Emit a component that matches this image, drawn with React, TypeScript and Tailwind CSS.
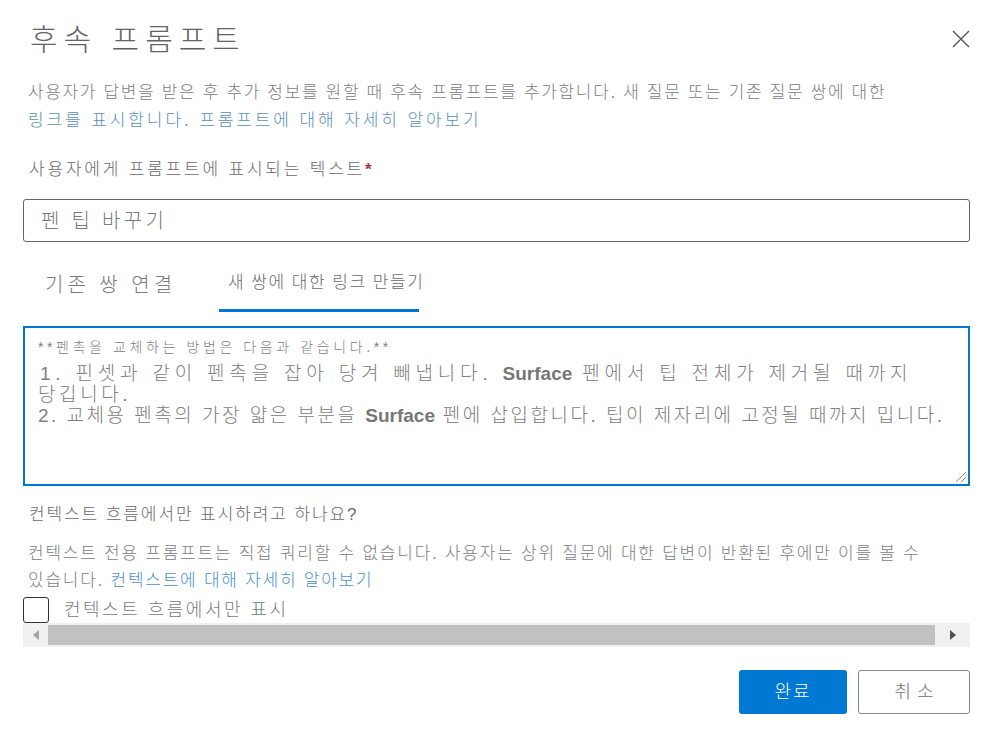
import React from 'react';

const font = { fontFamily: '"Liberation Sans", "Noto Sans CJK KR", sans-serif' };

export default function App() {
  return (
    <div className="w-[985px] h-[740px] bg-white overflow-hidden font-light" style={font}>
      <div className="pl-[23px] pr-[15px]">
        {/* header */}
        <div className="flex justify-between items-start pt-[18px]">
          <h1 className="pl-[7px] text-[30px] leading-[44px] text-[#646464] tracking-[6px] font-light">후속 프롬프트</h1>
          <button className="mt-[12px] w-[18px] h-[18px] flex items-center justify-center">
            <svg width="18" height="18" viewBox="0 0 18 18">
              <path d="M1 1 L17 17 M17 1 L1 17" stroke="#555" strokeWidth="1.4" fill="none" />
            </svg>
          </button>
        </div>

        {/* description */}
        <p className="mt-[17px] pl-[5px] text-[17px] leading-[28px] text-[#808080] whitespace-nowrap">
          <span className="tracking-[1.65px]">사용자가 답변을 받은 후 추가 정보를 원할 때 후속 프롬프트를 추가합니다. 새 질문 또는 기존 질문 쌍에 대한</span>
          <br />
          <span className="text-[#5b8fbf] tracking-[2.9px]">링크를 표시합니다. 프롬프트에 대해 자세히 알아보기</span>
        </p>

        {/* label */}
        <div className="mt-[21px] pl-[6px] text-[17px] leading-[28px] text-[#6b6b6b] tracking-[2.8px]">
          사용자에게 프롬프트에 표시되는 텍스트<span className="text-[#b0343a] font-bold">*</span>
        </div>

        {/* input */}
        <div className="mt-[15px] w-[947px] h-[43px] border border-[#666] rounded-[3px] flex items-center pl-[17px] text-[20px] text-[#7a7a7a] tracking-[3.3px]">
          펜 팁 바꾸기
        </div>

        {/* tabs */}
        <div className="mt-[16px] h-[54px] flex items-end">
          <div className="w-[196px] h-full flex flex-col">
            <div className="pl-[22px] pt-[12px] text-[20px] leading-[30px] text-[#7a7a7a] tracking-[4px]">기존 쌍 연결</div>
          </div>
          <div className="w-[210px] h-full flex flex-col justify-between">
            <div className="pl-[9px] pt-[12px] text-[17px] leading-[26px] text-[#6b6b6b] tracking-[1.5px] whitespace-nowrap">새 쌍에 대한 링크 만들기</div>
            <div className="w-[200px] h-[3px] bg-[#0078d4]" />
          </div>
        </div>

        {/* textarea */}
        <div className="relative mt-[14px] w-[947px] h-[160px] border-2 border-[#0078d4] pl-[13px] pt-[9px] text-[#808080] whitespace-nowrap">
          <div className="text-[14px] leading-[20px] tracking-[3.6px]">**펜촉을 교체하는 방법은 다음과 같습니다.**</div>
          <div className="text-[19px] leading-[21px] mt-[6px]">
            <div className="pl-[2px] tracking-[4.8px]">1. 핀셋과 같이 펜촉을 잡아 당겨 빼냅니다. <span className="font-bold tracking-[0px] text-[#777]">Surface</span> 펜에서 팁 전체가 제거될 때까지</div>
            <div className="tracking-[3.6px]">당깁니다.</div>
            <div className="tracking-[2.5px]">2. 교체용 펜촉의 가장 얇은 부분을 <span className="font-bold tracking-[0px] text-[#777]">Surface</span> 펜에 삽입합니다. 팁이 제자리에 고정될 때까지 밉니다.</div>
          </div>
          <svg className="absolute right-[1px] bottom-[1px]" width="12" height="12" viewBox="0 0 12 12">
            <path d="M11 1 L1 11 M11 6 L6 11" stroke="#888" strokeWidth="1" fill="none" />
          </svg>
        </div>

        {/* context question */}
        <div className="mt-[15px] pl-[6px] text-[17px] leading-[28px] text-[#6b6b6b] tracking-[1.9px]">
          컨텍스트 흐름에서만 표시하려고 하나요?
        </div>
        <p className="mt-[11px] pl-[5px] text-[17px] leading-[27px] text-[#808080] whitespace-nowrap tracking-[1.75px]">
          컨텍스트 전용 프롬프트는 직접 쿼리할 수 없습니다. 사용자는 상위 질문에 대한 답변이 반환된 후에만 이를 볼 수
          <br />
          있습니다. <span className="text-[#4a90d2]">컨텍스트에 대해 자세히 알아보기</span>
        </p>

        {/* checkbox */}
        <div className="mt-[3px] flex items-center h-[26px]">
          <div className="w-[26px] h-[26px] border border-[#333] rounded-[3px]" />
          <span className="ml-[15px] text-[18px] text-[#7a7a7a] tracking-[2.5px]">컨텍스트 흐름에서만 표시</span>
        </div>

        {/* horizontal scrollbar */}
        <div className="w-[947px] h-[24px] bg-[#f0f0f0] flex items-center">
          <div className="w-[25px] h-full flex items-center justify-center">
            <svg width="6" height="10" viewBox="0 0 6 10"><path d="M6 0 L0 5 L6 10 Z" fill="#a3a3a3" /></svg>
          </div>
          <div className="w-[887px] h-[20px] bg-[#c1c1c1]" />
          <div className="flex-1 h-full flex items-center justify-center">
            <svg width="6" height="10" viewBox="0 0 6 10"><path d="M0 0 L6 5 L0 10 Z" fill="#505050" /></svg>
          </div>
        </div>

        {/* buttons */}
        <div className="mt-[23px] w-[947px] flex justify-end gap-[11px]">
          <button className="w-[108px] h-[44px] bg-[#0078d4] rounded-[3px] text-white text-[18px] tracking-[2px]">완료</button>
          <button className="w-[112px] h-[44px] border border-[#8a8886] rounded-[3px] text-[#707070] text-[18px] tracking-[6px] pl-[6px]">취소</button>
        </div>
      </div>
    </div>
  );
}
